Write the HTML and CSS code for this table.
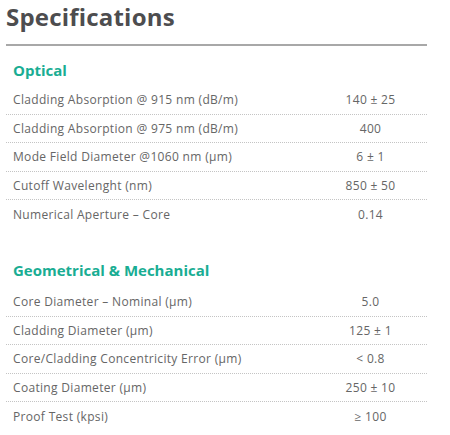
FILE: index.html
```html
<!DOCTYPE html>
<html>
<head>
<meta charset="utf-8">
<link rel="stylesheet" href="styles.css">
</head>
<body>
<div class="page">
  <h1 class="title">Specifications</h1>
  <div class="rule"></div>

  <h2 class="section">Optical</h2>
  <div class="table">
    <div class="row"><div class="label">Cladding Absorption @ 915 nm (dB/m)</div><div class="value">140 ± 25</div></div>
    <div class="row"><div class="label">Cladding Absorption @ 975 nm (dB/m)</div><div class="value">400</div></div>
    <div class="row"><div class="label">Mode Field Diameter @1060 nm (µm)</div><div class="value">6 ± 1</div></div>
    <div class="row"><div class="label">Cutoff Wavelenght (nm)</div><div class="value">850 ± 50</div></div>
    <div class="row last"><div class="label">Numerical Aperture – Core</div><div class="value">0.14</div></div>
  </div>

  <h2 class="section second">Geometrical &amp; Mechanical</h2>
  <div class="table second">
    <div class="row"><div class="label">Core Diameter – Nominal (µm)</div><div class="value">5.0</div></div>
    <div class="row"><div class="label">Cladding Diameter (µm)</div><div class="value">125 ± 1</div></div>
    <div class="row"><div class="label">Core/Cladding Concentricity Error (µm)</div><div class="value">&lt; 0.8</div></div>
    <div class="row"><div class="label">Coating Diameter (µm)</div><div class="value">250 ± 10</div></div>
    <div class="row last"><div class="label">Proof Test (kpsi)</div><div class="value">≥ 100</div></div>
  </div>
</div>
</body>
</html>
```
FILE: styles.css
```css
html, body {
  margin: 0;
  padding: 0;
  background: #ffffff;
}
.page {
  width: 421px;
  margin-left: 6px;
  font-family: "Open Sans", "Liberation Sans", sans-serif;
}
.title {
  margin: 2px 0 0 0;
  font-size: 24px;
  line-height: 30px;
  font-weight: 700;
  color: #4d4d4f;
  letter-spacing: 0.2px;
}
.rule {
  margin-top: 12px;
  height: 2px;
  background: #a8a8a8;
}
.section {
  margin: 14px 0 0 7px;
  font-size: 15px;
  line-height: 20px;
  font-weight: 700;
  color: #19ad93;
  letter-spacing: 0;
}
.section.second {
  margin-top: 31px;
}
.table {
  display: flex;
  flex-direction: column;
  margin-top: 6px;
}
.table.second {
  margin-top: 8px;
}
.row {
  display: flex;
  gap: 1px;
  height: 28.6px;
}
.label, .value {
  display: flex;
  align-items: center;
  border-bottom: 1px dotted #c4c4c4;
  font-size: 12px;
  color: #666666;
  font-weight: 400;
  letter-spacing: 0.32px;
}
.label {
  width: 300px;
  padding-left: 7px;
}
.value {
  flex: 1;
  justify-content: center;
}
.row.last .label, .row.last .value {
  border-bottom-color: transparent;
}
```
